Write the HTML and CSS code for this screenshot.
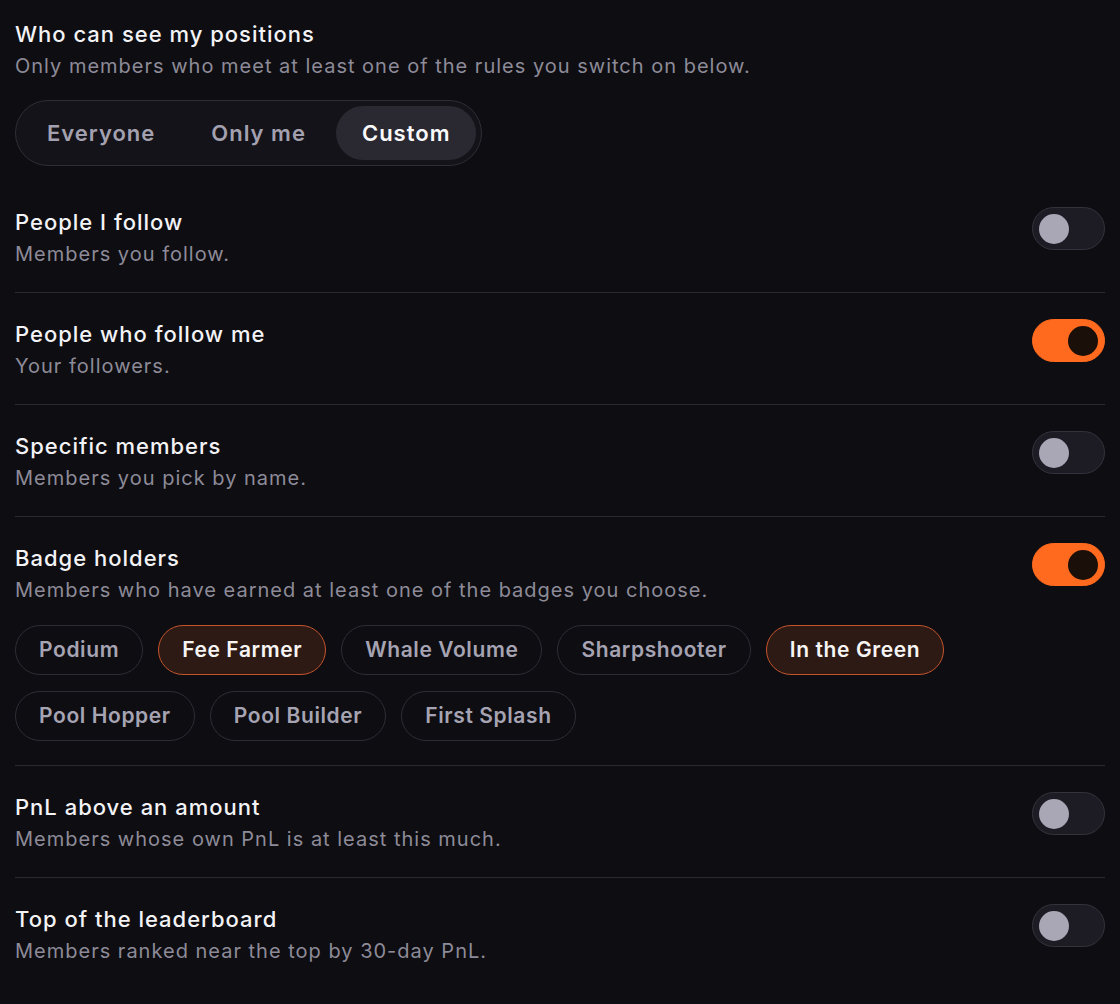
FILE: index.html
```html
<!DOCTYPE html>
<html lang="en">
<head>
    <meta charset="UTF-8">
    <meta name="viewport" content="width=device-width, initial-scale=1.0">
    <title>Position visibility</title>
    <link rel="stylesheet" href="styles.css">
</head>
<body>
    <div class="panel">
        <!-- Who can see -->
        <div class="intro">
            <div class="title">Who can see my positions</div>
            <div class="sub">Only members who meet at least one of the rules you switch on below.</div>
            <div class="segmented">
                <button class="seg">Everyone</button>
                <button class="seg">Only me</button>
                <button class="seg active">Custom</button>
            </div>
        </div>

        <div class="rule">
            <div class="rule-text">
                <div class="title">People I follow</div>
                <div class="sub">Members you follow.</div>
            </div>
            <span class="toggle"><span class="knob"></span></span>
        </div>

        <div class="rule">
            <div class="rule-text">
                <div class="title">People who follow me</div>
                <div class="sub">Your followers.</div>
            </div>
            <span class="toggle on"><span class="knob"></span></span>
        </div>

        <div class="rule">
            <div class="rule-text">
                <div class="title">Specific members</div>
                <div class="sub">Members you pick by name.</div>
            </div>
            <span class="toggle"><span class="knob"></span></span>
        </div>

        <div class="rule">
            <div class="rule-text">
                <div class="title">Badge holders</div>
                <div class="sub">Members who have earned at least one of the badges you choose.</div>
                <div class="chips">
                    <span class="chip">Podium</span>
                    <span class="chip picked">Fee Farmer</span>
                    <span class="chip">Whale Volume</span>
                    <span class="chip">Sharpshooter</span>
                    <span class="chip picked">In the Green</span>
                    <span class="chip">Pool Hopper</span>
                    <span class="chip">Pool Builder</span>
                    <span class="chip">First Splash</span>
                </div>
            </div>
            <span class="toggle on"><span class="knob"></span></span>
        </div>

        <div class="rule">
            <div class="rule-text">
                <div class="title">PnL above an amount</div>
                <div class="sub">Members whose own PnL is at least this much.</div>
            </div>
            <span class="toggle"><span class="knob"></span></span>
        </div>

        <div class="rule">
            <div class="rule-text">
                <div class="title">Top of the leaderboard</div>
                <div class="sub">Members ranked near the top by 30-day PnL.</div>
            </div>
            <span class="toggle"><span class="knob"></span></span>
        </div>
    </div>
</body>
</html>
```

FILE: styles.css
```css
body {
    font-family: Inter, "Noto Sans", sans-serif;
    margin: 0;
    padding: 0;
    background-color: #0e0d12;
    color: #f3f3f6;
}
.panel {
    padding: 18px 15px 0 15px;
}
.title {
    font-size: 22px;
    font-weight: 500;
    line-height: 32px;
    letter-spacing: 1px;
    color: #f3f3f6;
}
.sub {
    font-size: 20px;
    line-height: 32px;
    letter-spacing: 1px;
    color: #8d8b98;
}
.segmented {
    display: inline-flex;
    gap: 4px;
    margin-top: 18px;
    padding: 5px;
    border: 1px solid #2f2e36;
    border-radius: 40px;
    background: #141319;
}
.seg {
    font-family: inherit;
    font-size: 22px;
    font-weight: 600;
    letter-spacing: 1px;
    height: 54px;
    padding: 0 26px;
    border: none;
    border-radius: 27px;
    background: transparent;
    color: #a3a1af;
}
.seg.active {
    background: #2a2931;
    color: #fafafc;
}
.intro {
    margin-bottom: 15px;
}
.rule {
    display: flex;
    justify-content: space-between;
    align-items: flex-start;
    padding: 25px 0 22px 0;
    border-bottom: 1px solid #2a2930;
}
.rule:last-child {
    border-bottom: none;
}
.toggle {
    flex: none;
    display: flex;
    align-items: center;
    box-sizing: border-box;
    width: 73px;
    height: 43px;
    margin-top: 1px;
    padding: 0 6px;
    border: 1px solid #34333c;
    border-radius: 22px;
    background: #1d1c24;
}
.knob {
    width: 30px;
    height: 30px;
    border-radius: 50%;
    background: #a9a6b6;
}
.toggle.on {
    justify-content: flex-end;
    border-color: #ff6a1e;
    background: #ff6a1e;
}
.toggle.on .knob {
    background: #1b0f0a;
}
.chips {
    display: flex;
    flex-wrap: wrap;
    gap: 16px 15px;
    margin-top: 19px;
    padding-bottom: 2px;
}
.chip {
    box-sizing: border-box;
    height: 50px;
    line-height: 48px;
    padding: 0 23px;
    border: 1px solid #2e2d35;
    border-radius: 25px;
    font-size: 21px;
    font-weight: 600;
    letter-spacing: 0.6px;
    color: #a6a4b2;
}
.chip.picked {
    background: #2e1a14;
    border-color: #c4542c;
    color: #f7f5f4;
}
```
